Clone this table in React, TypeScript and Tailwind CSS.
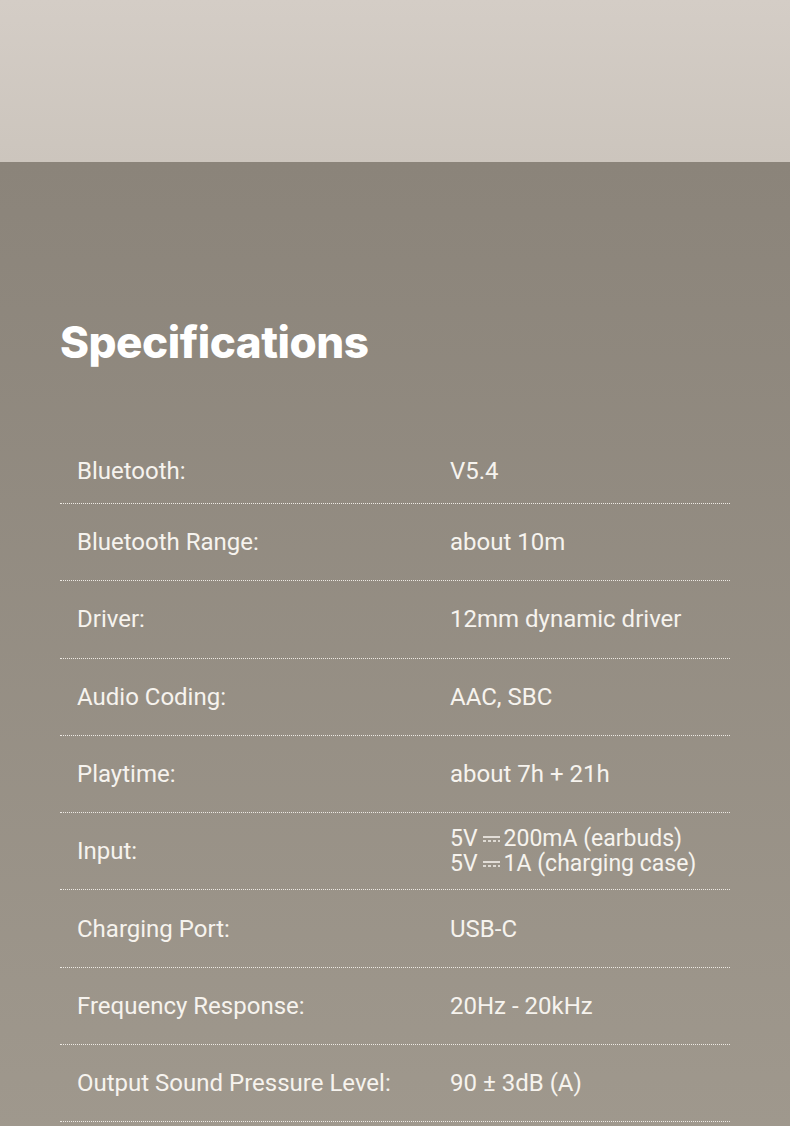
import React from "react";

interface Spec {
  label: string;
  value: React.ReactNode;
}

function DcSymbol() {
  return (
    <svg width="26" height="10" viewBox="0 0 26 10" className="inline-block align-middle">
      <line x1="5" y1="3" x2="22" y2="3" stroke="#f4f1ec" strokeWidth="1.6" />
      <line x1="5" y1="7" x2="22" y2="7" stroke="#f4f1ec" strokeWidth="1.6" strokeDasharray="3 2" />
    </svg>
  );
}

const specs: Spec[] = [
  { label: "Bluetooth:", value: "V5.4" },
  { label: "Bluetooth Range:", value: "about 10m" },
  { label: "Driver:", value: "12mm dynamic driver" },
  { label: "Audio Coding:", value: "AAC, SBC" },
  { label: "Playtime:", value: "about 7h + 21h" },
  {
    label: "Input:",
    value: (
      <div className="text-[23px] leading-[25px]">
        <div className="flex items-center">
          5V<DcSymbol />200mA (earbuds)
        </div>
        <div className="flex items-center">
          5V<DcSymbol />1A (charging case)
        </div>
      </div>
    ),
  },
  { label: "Charging Port:", value: "USB-C" },
  { label: "Frequency Response:", value: "20Hz - 20kHz" },
  { label: "Output Sound Pressure Level:", value: "90 ± 3dB (A)" },
];

export default function App() {
  return (
    <div className="w-[790px] h-[1126px] overflow-hidden font-['Roboto',sans-serif]">
      {/* top banner */}
      <div className="h-[162px] bg-gradient-to-b from-[#d4cdc6] to-[#ccc5bd]" />

      {/* specs */}
      <div className="h-[964px] bg-gradient-to-b from-[#8b847a] to-[#9f988d] px-[60px]">
        <h1 className="pt-[154px] text-[44px] leading-[52px] font-extrabold tracking-[-0.5px] text-white font-['Inter',sans-serif]">
          Specifications
        </h1>
        <div className="mt-[70px]">
          {specs.map((s, i) => (
            <div
              key={s.label}
              className={`flex items-center border-b border-dotted border-[#eeeae4] text-[24px] text-[#f6f3ee] ${
                i === 0 ? "h-[66px]" : "h-[77.3px]"
              }`}
            >
              <div className="w-[390px] pl-[17px]">{s.label}</div>
              <div className="flex-1">{s.value}</div>
            </div>
          ))}
        </div>
      </div>
    </div>
  );
}
